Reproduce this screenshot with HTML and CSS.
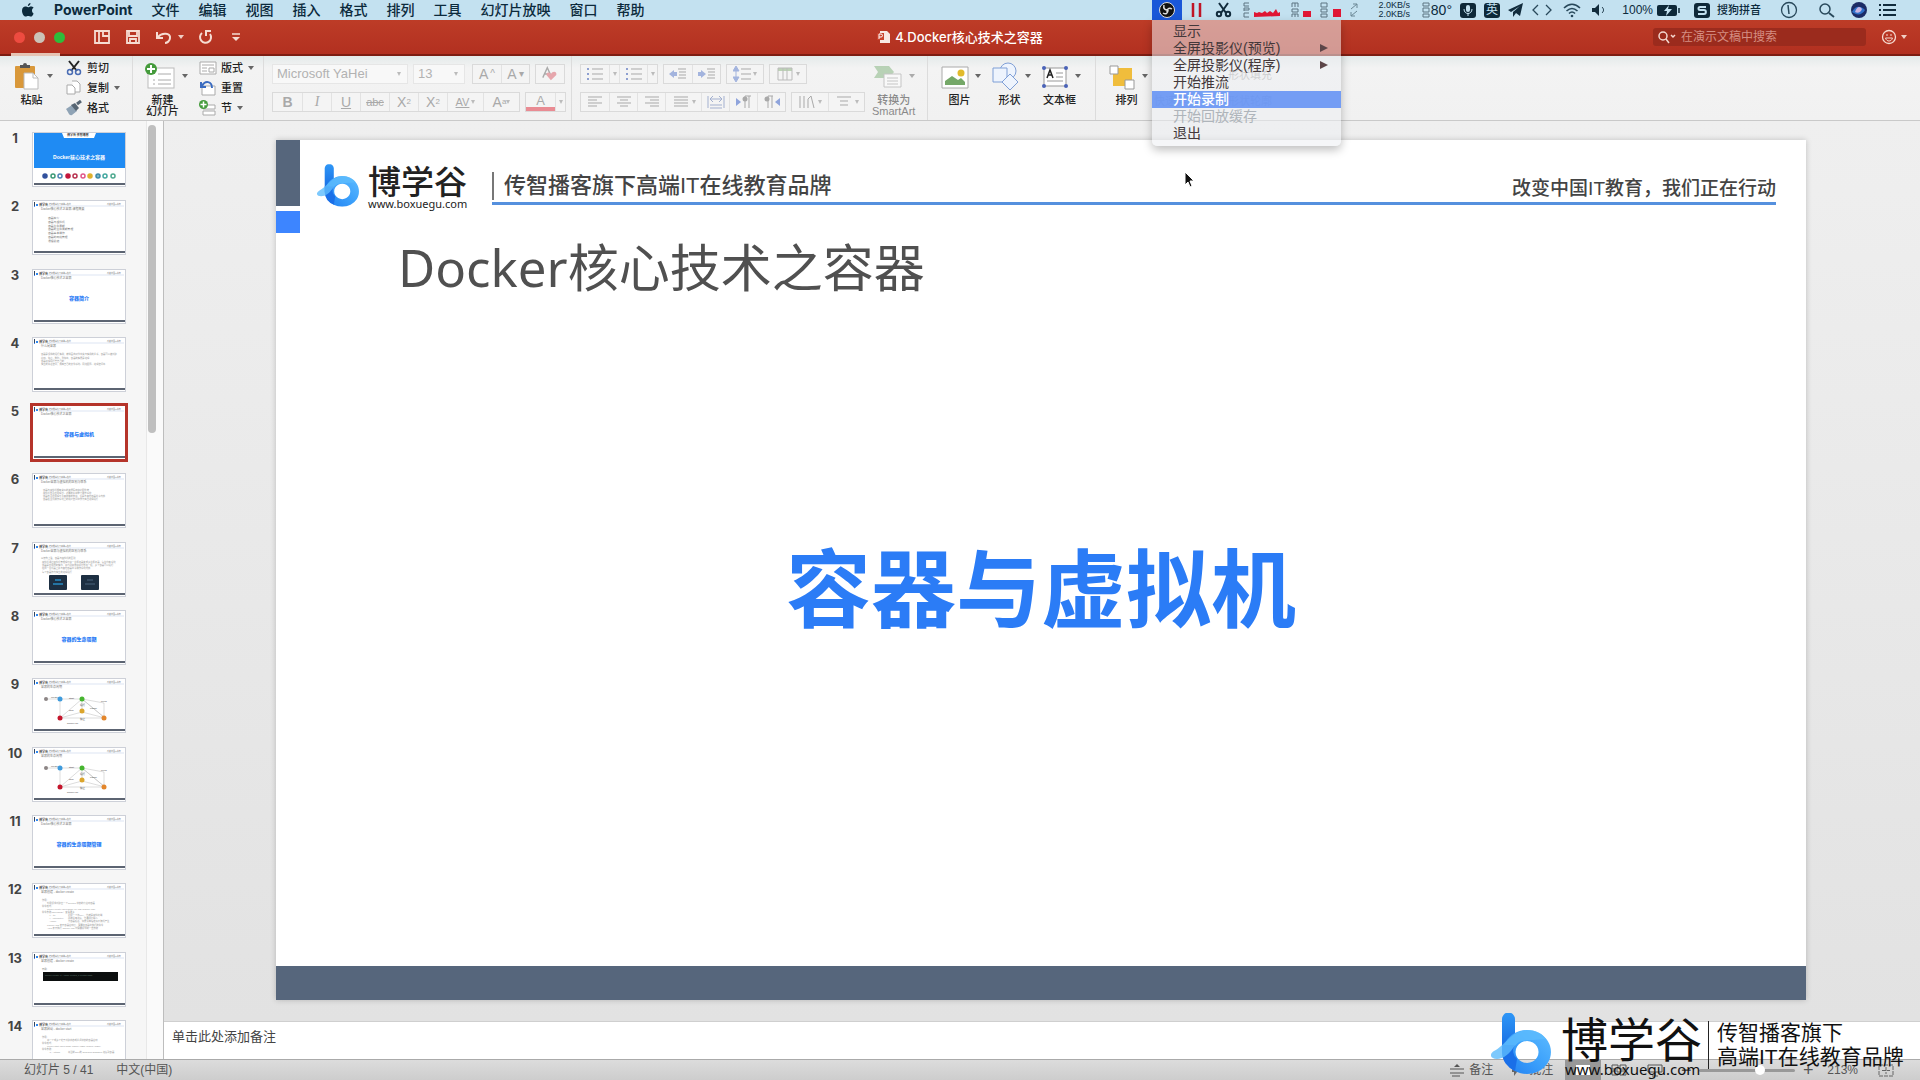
FILE: index.html
```html
<!DOCTYPE html>
<html lang="zh-CN">
<head>
<meta charset="utf-8">
<title>4.Docker核心技术之容器</title>
<link rel="stylesheet" href="styles.css">
</head>
<body>
<svg class="defs" aria-hidden="true">
  <linearGradient id="g-stem" x1="0" y1="0" x2="0" y2="1"><stop offset="0" stop-color="#2f97f7"/><stop offset="1" stop-color="#1467e0"/></linearGradient>
  <linearGradient id="g-bowl" x1="0" y1="1" x2="1" y2="0"><stop offset="0" stop-color="#1f7df0"/><stop offset=".5" stop-color="#3ba0fb"/><stop offset="1" stop-color="#5fbcff"/></linearGradient>
  <symbol id="logo-b" viewBox="0 0 60 61">
    <path d="M11 6a6.500 6.500 0 0 1 13 0V40H11z" fill="url(#g-stem)"/>
    <path d="M36 17a24 22 0 1 1-.1 0zM36 28a11.500 11 0 1 0 .1 0z" fill="url(#g-bowl)" fill-rule="evenodd"/>
    <path d="M11 32V40a25 21 0 0 0 13 18l2-12a12 11 0 0 1-2-14z" fill="#1a6fe8"/>
    <path d="M3 38C14 33 20 18 36 17c8 0 15 3 19 9-12 1-17 1-24 2-9 2-11 17-25 18-7 0-8-5-3-8z" fill="#5dbcfd" opacity=".8"/>
  </symbol>
  <symbol id="lines" viewBox="0 0 18 16"><path d="M2 3h14M2 6h9M2 9h14M2 12h9" stroke="currentColor" fill="none"/></symbol>
  <symbol id="lines-c" viewBox="0 0 18 16"><path d="M2 3h14M5 6h8M2 9h14M5 12h8" stroke="currentColor" fill="none"/></symbol>
  <symbol id="lines-r" viewBox="0 0 18 16"><path d="M2 3h14M7 6h9M2 9h14M7 12h9" stroke="currentColor" fill="none"/></symbol>
  <symbol id="lines-j" viewBox="0 0 18 16"><path d="M2 3h14M2 6h14M2 9h14M2 12h14" stroke="currentColor" fill="none"/></symbol>
  <symbol id="bullets" viewBox="0 0 18 16"><path d="M6 3h11M6 8h11M6 13h11" stroke="currentColor"/><path d="M1 3h2M1 8h2M1 13h2" stroke="#8e9fd0" stroke-width="2"/></symbol>
  <symbol id="spacing" viewBox="0 0 18 16"><path d="M8 3h10M8 8h10M8 13h10" stroke="currentColor"/><path d="M3 0l3 5H0zM3 16l3-5H0zM3 4v8" fill="#a3b4de" stroke="#a3b4de"/></symbol>
  <symbol id="indent" viewBox="0 0 18 16"><path d="M9 3h8M10 6h7M10 9h7M9 12h8" stroke="currentColor"/><path d="M0 8l5-4v2h3v4H5v2z" fill="#a3b4de"/></symbol>
  <symbol id="indent-more" viewBox="0 0 18 16"><path d="M9 3h8M10 6h7M10 9h7M9 12h8" stroke="currentColor"/><path d="M8 8L3 4v2H0v4h3v2z" fill="#a3b4de"/></symbol>
  <symbol id="plus" viewBox="0 0 12 12"><circle cx="6" cy="6" r="6" fill="#459b3c"/><path d="M6 2v8M2 6h8" stroke="#fff" stroke-width="2"/></symbol>
  <symbol id="thumb-head" viewBox="0 0 94 55">
    <path d="M2 2h1v4H2z" fill="#33465f"/><path d="M2 6h1v1H2z" fill="#3d85ff"/>
    <path d="M4 4h2v2H4z" fill="#2f87ee"/><text x="7" y="6" font-size="3" font-weight="700" fill="#444">博学谷</text>
    <text x="17" y="5" font-size="2">传智播客旗下高端IT在线</text><text x="75" y="5" font-size="2">改变中国IT教育</text>
    <path d="M15 6h77" stroke="#b9c9e4" stroke-width=".5"/><path d="M2 51h91v2H2z" fill="#5c6472"/>
  </symbol>
  <symbol id="thumb-flow" viewBox="0 0 94 55">
    <path d="M14 21h14M28 21h22M28 21v19h45L50 21v14M28 40l22-19 23 19-23-6-22 6M50 21l22 4v15" stroke="#bbb" stroke-width=".5" fill="none"/>
    <circle cx="14" cy="21" r="2" fill="#8c8585"/><circle cx="28" cy="21" r="2.500" fill="#3f9bdc"/><circle cx="50" cy="21" r="2.500" fill="#46b52f"/>
    <circle cx="50" cy="33" r="2.500" fill="#dba52c"/><circle cx="28" cy="40" r="2.500" fill="#c4152b"/><circle cx="72" cy="40" r="2.500" fill="#e3862b"/>
    <g font-size="2.500" fill="#444"><text x="19" y="20">create</text><text x="37" y="21">start</text><text x="48" y="28">运行</text><text x="69" y="24">killed</text><text x="37" y="33">stop</text><text x="58" y="31">pause</text><text x="48" y="42">停止</text><text x="35" y="46">docker rm</text></g>
  </symbol>
</svg>

<div class="app">
  <header class="menubar">
    <nav class="menus">
      <svg class="apple" viewBox="0 0 14 14"><path d="M9.500 0c.1 1.600-1.200 3-2.600 3C6.700 1.500 8 .2 9.500 0zM12.600 10.400C12 12 10.900 13.600 9.800 13.600c-1 0-1.400-.6-2.600-.6s-1.600.6-2.500.6C2.800 13.600 1 10.200 1 7.700 1 5 2.700 3.600 4.400 3.600c1.100 0 2 .7 2.700.7s1.700-.8 3-.8c.5 0 1.800.1 2.500 1.300-2.300 1.400-1.900 4.600 0 5.600z" fill="#0c2a3c"/></svg>
      <a href="#" class="appname">PowerPoint</a><a href="#">文件</a><a href="#">编辑</a><a href="#">视图</a><a href="#">插入</a><a href="#">格式</a><a href="#">排列</a><a href="#">工具</a><a href="#">幻灯片放映</a><a href="#">窗口</a><a href="#">帮助</a>
    </nav>
    <div class="tray">
      <div class="obs">
        <svg width="30" height="20" viewBox="0 0 30 20"><circle cx="15" cy="10" r="7.500" fill="#111" stroke="#ddd"/><g fill="none" stroke="#ddd" stroke-width="1.500"><path d="M12 5c-1 4 1 5 4 5"/><path d="M20 9c-3-2-5 0-5 3"/><path d="M11 13c3 2 5 0 5-3"/></g></svg>
        <div class="dropdown" role="menu">
          <button role="menuitem">显示</button>
          <button role="menuitem">全屏投影仪(预览)<i class="sub"></i></button>
          <button role="menuitem">全屏投影仪(程序)<i class="sub"></i></button>
          <button role="menuitem">开始推流</button>
          <button role="menuitem" class="active">开始录制</button>
          <button role="menuitem" disabled>开始回放缓存</button>
          <button role="menuitem">退出</button>
        </div>
      </div>
      <svg width="14" height="20" viewBox="0 0 14 20"><path d="M3 3v14M10 3v14" stroke="#c01526" stroke-width="2.500"/></svg>
      <svg width="22" height="20" viewBox="0 0 22 20"><g fill="none" stroke="#112b3c" stroke-width="2"><path d="M7 3l7 10M16 3L9 13"/><circle cx="7" cy="14" r="2.200"/><circle cx="16" cy="14" r="2.200"/></g></svg>
      <svg width="41" height="20" viewBox="0 0 41 20"><path d="M7 3H2v3h5M2 11V8h5v2H2M7 13H2v4h5" fill="none" stroke="#5d7482"/><path d="M12 17v-5l3 1 2-1 3 1 3-2 2 2 3-2 3 2 3-4 2 4 2-1v4z" fill="#e01634"/></svg>
      <svg width="21" height="20" viewBox="0 0 21 20"><path d="M1 7V3h6v4M4 3v4M1 9h6v3H1zM1 17v-3h6v3M4 14v3" fill="none" stroke="#5d7482"/><path d="M12 11h8v6h-8z" fill="#e01634"/></svg>
      <svg width="22" height="20" viewBox="0 0 22 20"><path d="M1 3h6v4H1zM1 9h6v3H1zM1 14h6v3H1z" fill="none" stroke="#5d7482"/><path d="M13 9h8v8h-8z" fill="#e01634"/></svg>
      <svg width="8" height="20" viewBox="0 0 8 20"><path d="M1 9l6-5M3 4h4v4M7 11l-6 5M1 12v4h4" fill="none" stroke="#6b8795"/></svg>
      <div class="net">2.0KB/s<br>2.0KB/s</div>
      <div class="temp"><svg width="9" height="20" viewBox="0 0 9 20"><path d="M1 3h6v3H1zM1 8h6v4H1zM1 14h6v3H1z" fill="none" stroke="#5d7482"/></svg>80°</div>
      <svg width="16" height="20" viewBox="0 0 16 20"><rect y="3" width="16" height="15" rx="3" fill="#0e2838"/><rect x="6" y="5" width="4" height="7" rx="2" fill="#c3e1f0"/><path d="M4 9c0 6 8 6 8 0M8 13v3" fill="none" stroke="#c3e1f0"/></svg>
      <span class="ime">英</span>
      <svg width="15" height="20" viewBox="0 0 15 20"><path d="M0 10L15 3l-3 13-4-3-3 4v-5l7-6-9 6z" fill="#112b3c"/></svg>
      <svg width="22" height="20" viewBox="0 0 22 20"><path d="M7 5l-5 5 5 5M15 5l5 5-5 5" fill="none" stroke="#28485a" stroke-width="1.300"/></svg>
      <svg width="22" height="20" viewBox="0 0 22 20"><g fill="none" stroke="#28485a" stroke-width="1.600"><path d="M3 8c5-5 11-5 16 0M5.500 11c4-3.500 7-3.500 11 0M8 13.500c2-2 4-2 6 0"/></g><circle cx="11" cy="16" r="1.300" fill="#28485a"/></svg>
      <svg width="16" height="20" viewBox="0 0 16 20"><path d="M1 8h3l4-4v12l-4-4H1z" fill="#112b3c"/><path d="M11 7c2 2 2 4 0 6" fill="none" stroke="#112b3c"/></svg>
      <div class="power">100%<svg width="25" height="20" viewBox="0 0 25 20"><rect x="1" y="5" width="20" height="11" rx="2" fill="#0e2838"/><path d="M23 8v5" stroke="#0e2838" stroke-width="1.500"/><path d="M13 5l-5 6h3l-1 5 6-7h-4z" fill="#c3e1f0"/></svg></div>
      <div class="sogou"><svg width="17" height="20" viewBox="0 0 17 20"><rect y="3" width="16" height="15" rx="3" fill="#0e2838"/><path d="M12 7H6c-2 0-2 3 0 3h4c2.500 0 2.500 4 0 4H4" fill="none" stroke="#c3e1f0" stroke-width="2"/></svg>搜狗拼音</div>
      <svg width="30" height="20" viewBox="0 0 30 20"><circle cx="20" cy="10" r="7.500" fill="none" stroke="#28485a" stroke-width="1.300"/><path d="M19 5l1 9" stroke="#28485a" stroke-width="1.500"/></svg>
      <svg width="28" height="20" viewBox="0 0 28 20"><circle cx="18" cy="9" r="5" fill="none" stroke="#28485a" stroke-width="1.500"/><path d="M22 13l5 4" stroke="#28485a" stroke-width="1.800"/></svg>
      <svg width="26" height="20" viewBox="0 0 26 20"><circle cx="16" cy="10" r="8" fill="#1c2c66"/><path d="M9 12c3-6 8-7 13-2-3 5-8 6-13 2z" fill="#2f6fc9"/><path d="M12 12c2-6 5-6 7-3-1 3-4 5-7 3z" fill="#c9b5e2"/></svg>
      <svg width="20" height="20" viewBox="0 0 20 20"><path d="M6 5h13M6 10h13M6 15h13" stroke="#112b3c" stroke-width="2"/><path d="M2 5h2M2 10h2M2 15h2" stroke="#112b3c" stroke-width="2"/></svg>
    </div>
  </header>

  <div class="titlebar">
    <div class="quick">
      <span class="lights"><i class="red"></i><i class="gray"></i><i class="green"></i></span>
      <button aria-label="模板"><svg width="18" height="16" viewBox="0 0 18 16"><path d="M2 2h14v12H2zM6 2v12M10 2v5h6" fill="none" stroke="#f6dcd2" stroke-width="1.800"/></svg></button>
      <button aria-label="保存"><svg width="16" height="16" viewBox="0 0 16 16"><path d="M2 2h12v12H2zM4 2v5h8V2M5 14v-4h6v4" fill="none" stroke="#f6dcd2" stroke-width="1.800"/></svg></button>
      <button aria-label="撤销" class="undo"><svg width="18" height="16" viewBox="0 0 18 16"><path d="M2 3v6h6M3 8c4-5 13-4 12 1 0 3-3 5-5 5" fill="none" stroke="#f6dcd2" stroke-width="2"/></svg><i class="caret"></i></button>
      <button aria-label="重做"><svg width="16" height="16" viewBox="0 0 16 16"><path d="M4 4a5.500 5.500 0 1 0 8 1M8 7V2h5" fill="none" stroke="#f6dcd2" stroke-width="2"/></svg></button>
      <button aria-label="自定义"><svg width="16" height="16" viewBox="0 0 16 16"><path d="M4 5h8" stroke="#f6dcd2" stroke-width="1.500"/><path d="M4 8h8l-4 4z" fill="#f6dcd2"/></svg></button>
    </div>
    <h1 class="doc"><svg width="14" height="14" viewBox="0 0 14 14"><path d="M3 1h7l3 3v9H3z" fill="#f8e9e4"/><path d="M0 3h7v7H0z" fill="#c9432c"/><path d="M2 9V4h2a1.500 1.500 0 0 1 0 3H2" fill="none" stroke="#fff"/></svg>4.Docker核心技术之容器</h1>
    <div class="find">
      <label class="search"><svg width="20" height="16" viewBox="0 0 20 16"><circle cx="6" cy="7" r="4" fill="none" stroke="#f4d8d0" stroke-width="1.500"/><path d="M9 10l3 4M14 6l2 2 2-2" fill="none" stroke="#f4d8d0" stroke-width="1.500"/></svg><input type="search" placeholder="在演示文稿中搜索" aria-label="在演示文稿中搜索"></label>
      <button class="smile" aria-label="反馈"><svg width="16" height="16" viewBox="0 0 16 16"><circle cx="8" cy="8" r="6.500" fill="none" stroke="#f6dcd2" stroke-width="1.300"/><path d="M6 5v2M10 5v2M4.500 9c1 4 6 4 7 0z" fill="none" stroke="#f6dcd2"/></svg><i class="caret"></i></button>
    </div>
  </div>

  <div class="ribbon">
    <section class="group g-clip">
      <button class="big"><span><svg width="28" height="28" viewBox="0 0 28 28"><rect x="2" y="4" width="20" height="22" rx="1" fill="#d9983a"/><path d="M7 6V3h3a2 2 0 0 1 4 0h3v3z" fill="#555"/><path d="M11 11h9l5 5v11H11z" fill="#fff" stroke="#bbb"/><path d="M20 11v5h5" fill="none" stroke="#bbb"/></svg><i class="caret"></i></span><b>粘贴</b></button>
      <div class="stack">
        <button><svg width="18" height="16" viewBox="0 0 18 16"><path d="M4 1l8 10M14 1L6 11" stroke="#222" stroke-width="2"/><g fill="none" stroke="#4a6db5" stroke-width="1.500"><circle cx="5" cy="12" r="2.500"/><circle cx="13" cy="12" r="2.500"/></g></svg>剪切</button>
        <button><svg width="18" height="16" viewBox="0 0 18 16"><path d="M2 5h5l3 3v6H2zM7 1h5l3 3v8h-5" fill="#fff" stroke="#aaa"/></svg>复制<i class="caret"></i></button>
        <button><svg width="18" height="16" viewBox="0 0 18 16"><path d="M1 9l6-4 5 6-5 4c-3 1-3-2-6-6z" fill="#8fa3b5"/><path d="M6 5l4-2 4 5-3 3z" fill="#566573"/><path d="M12 4l4-3" stroke="#566573" stroke-width="3"/></svg>格式</button>
      </div>
    </section>
    <section class="group g-slide">
      <button class="big"><span><svg width="32" height="28" viewBox="0 0 32 28"><rect x="4" y="6" width="26" height="20" fill="#fff" stroke="#bbb"/><path d="M14 12h13M9 18h2M14 18h13M9 22h2M14 22h13" stroke="#aaa"/><use href="#plus" x="1" y="1" width="12" height="12"/></svg><i class="caret"></i></span><b>新建<br>幻灯片</b></button>
      <div class="stack">
        <button><svg width="18" height="16" viewBox="0 0 18 16"><path d="M1 2h16v12H1zM3 5h12M3 8h5M3 11h5M10 8h5v4h-5z" fill="#fff" stroke="#aaa"/></svg>版式<i class="caret"></i></button>
        <button><svg width="18" height="16" viewBox="0 0 18 16"><path d="M3 6h13v9H3z" fill="#fff" stroke="#aaa"/><path d="M2 2v5h5M3 6c3-6 10-5 10 2" fill="none" stroke="#3b6cc0" stroke-width="2"/></svg>重置</button>
        <button><svg width="18" height="16" viewBox="0 0 18 16"><path d="M4 5h12v4H4zM4 11h12v4H4z" fill="#fff" stroke="#aaa"/><use href="#plus" x="0" y="0" width="9" height="9"/></svg>节<i class="caret"></i></button>
      </div>
    </section>
    <section class="group g-font">
      <div class="row">
        <label class="combo w-name"><select aria-label="字体"><option>Microsoft YaHei</option></select><i class="caret"></i></label>
        <label class="combo w-size"><select aria-label="字号"><option>13</option></select><i class="caret"></i></label>
        <div class="seg"><button class="c28 lg">A<small>^</small></button><button class="c28">A<small>▾</small></button></div>
        <div class="seg"><button class="c28"><svg width="20" height="16" viewBox="0 0 20 16"><path d="M2 12L7 1l5 11M4 8h6" fill="none" stroke="#aaa" stroke-width="1.500"/><path d="M11 15L6 9c0-4 4-3 5-1 2-4 7-3 6 1z" fill="#e6a6ac"/></svg></button></div>
      </div>
      <div class="row">
        <div class="seg"><button class="c28"><b>B</b></button><button class="c28 it">I</button><button class="c28"><u>U</u></button><button class="c28 sm"><s>abc</s></button><button class="c28 sc">X<sup>2</sup></button><button class="c28 sc">X<sub>2</sub></button><button class="c36 sm"><u>AV</u><i class="caret"></i></button><button class="c36 sc">A<sup>a</sup><i class="caret"></i></button></div>
        <div class="seg"><button class="c28 ink">A</button><button class="c10"><i class="caret"></i></button></div>
      </div>
    </section>
    <section class="group g-para">
      <div class="rows">
        <div class="row">
          <div class="seg"><button class="c28"><svg><use href="#bullets"/></svg></button><button class="c10"><i class="caret"></i></button><button class="c28"><svg><use href="#bullets"/></svg></button><button class="c10"><i class="caret"></i></button></div>
          <div class="seg"><button class="c28"><svg><use href="#indent"/></svg></button><button class="c28"><svg><use href="#indent-more"/></svg></button></div>
          <div class="seg"><button class="c36"><svg><use href="#spacing"/></svg><i class="caret"></i></button></div>
          <div class="seg"><button class="c36"><svg viewBox="0 0 18 16"><path d="M2 2h14v3H2z" fill="#bcd3b5"/><path d="M2 2h14v12H2zM7 2v12M11 2v12" fill="none" stroke="#bbb"/></svg><i class="caret"></i></button></div>
        </div>
        <div class="row">
          <div class="seg"><button class="c28"><svg><use href="#lines"/></svg></button><button class="c28"><svg><use href="#lines-c"/></svg></button><button class="c28"><svg><use href="#lines-r"/></svg></button><button class="c36"><svg><use href="#lines-j"/></svg><i class="caret"></i></button><button class="c28"><svg viewBox="0 0 18 16"><path d="M1 2v12M17 2v12M3 5h12M6 2L3 5l3 3M12 2l3 3-3 3M3 11h12M3 14h12" fill="none" stroke="#a3b0cf"/></svg></button><button class="c28"><svg viewBox="0 0 18 16"><path d="M1 4l5 4-5 4z" fill="#8fa4dc"/><path d="M10 14V2h6M14 14V2" stroke="currentColor" fill="none"/><circle cx="10" cy="5" r="2.500" fill="currentColor"/></svg></button><button class="c28"><svg viewBox="0 0 18 16"><path d="M17 4l-5 4 5 4z" fill="#8fa4dc"/><path d="M5 14V2h5M9 14V2" stroke="currentColor" fill="none"/><circle cx="4" cy="5" r="2.500" fill="currentColor"/></svg></button></div>
          <div class="seg"><button class="c36"><svg viewBox="0 0 18 16"><path d="M2 2v12M6 2v12M10 14V5l3-3 3 12" fill="none" stroke="currentColor"/></svg><i class="caret"></i></button><button class="c36"><svg viewBox="0 0 18 16"><path d="M2 3h14M5 7h8M5 11h8" stroke="currentColor"/></svg><i class="caret"></i></button></div>
        </div>
      </div>
      <button class="big faded"><span><svg width="30" height="28" viewBox="0 0 30 28"><path d="M1 4h15l5 6-5 6H1l4-6z" fill="#7fb27a"/><path d="M11 12h17v13H11z" fill="#fff" stroke="#999"/><path d="M14 16h11M14 19h11M14 22h11" stroke="#999"/></svg><i class="caret"></i></span><b>转换为<br>SmartArt</b></button>
    </section>
    <section class="group g-insert">
      <button class="big"><span><svg width="28" height="28" viewBox="0 0 28 28"><path d="M1 5h26v21H1z" fill="#fff" stroke="#aaa"/><path d="M4 23v-4l7-5 6 4 3-2 4 4v3z" fill="#75a868"/><circle cx="20" cy="11" r="3.500" fill="#e2bb2d"/></svg><i class="caret"></i></span><b>图片</b></button>
      <button class="big"><span><svg width="28" height="28" viewBox="0 0 28 28"><g fill="#eef4fd" stroke="#7f9fd6"><circle cx="17" cy="9" r="8"/><path d="M2 6h14v14H2z"/><path d="M19 12l8 8-8 8-8-8z"/></g></svg><i class="caret"></i></span><b>形状</b></button>
      <button class="big"><span><svg width="28" height="28" viewBox="0 0 28 28"><path d="M3 6h22v18H3z" fill="#fff" stroke="#999"/><path d="M15 11h7M15 15h7M6 19h16" stroke="#999"/><path d="M6 16l3-8 3 8M7 13h4" fill="none" stroke="#222" stroke-width="1.500"/><g fill="#4a63b8"><circle cx="3" cy="6" r="2"/><circle cx="25" cy="6" r="2"/><circle cx="3" cy="24" r="2"/><circle cx="25" cy="24" r="2"/></g></svg><i class="caret"></i></span><b>文本框</b></button>
    </section>
    <section class="group g-arrange">
      <button class="big"><span><svg width="28" height="28" viewBox="0 0 28 28"><path d="M5 6h19v18H5z" fill="#f0bd3c"/><path d="M2 4h8v8H2zM17 18h9v9h-9z" fill="#fff" stroke="#999"/></svg><i class="caret"></i></span><b>排列</b></button>
      <button class="big faded quickstyle">快速样式</button>
      <div class="stack faded shapes"><button>形状填充</button><button>形状轮廓</button></div>
    </section>
  </div>

  <main class="work">
    <aside class="pane">
      <ol class="slides">
        <li><span>1</span><svg viewBox="0 0 94 55"><path d="M2 1h91v35H2z" fill="#1f8bf3"/><path d="M30 1h34l-2 5H32z" fill="#fff"/><text x="35" y="4" font-size="3" font-weight="700" fill="#333">博学谷 传智播客</text><text x="47" y="27" font-size="5" font-weight="700" fill="#fff" text-anchor="middle">Docker核心技术之容器</text>
          <g fill="#fff" stroke-width="1.500"><circle cx="13" cy="44" r="2" stroke="#30509c" fill="#30509c"/><circle cx="21" cy="44" r="2" stroke="#3c9a76"/><circle cx="28" cy="44" r="2" stroke="#4d85b5"/><circle cx="36" cy="44" r="2" stroke="#c3143b" fill="#c3143b"/><circle cx="43" cy="44" r="2" stroke="#b73250"/><circle cx="51" cy="44" r="2" stroke="#e0568a"/><circle cx="58" cy="44" r="2" stroke="#dfb02c" fill="#dfb02c"/><circle cx="66" cy="44" r="2" stroke="#3c89a8" fill="#79b4c4"/><circle cx="73" cy="44" r="2" stroke="#43a8a0"/><circle cx="81" cy="44" r="2" stroke="#4faa90"/></g><path d="M2 51h91v2H2z" fill="#5c6472"/></svg></li>
        <li><span>2</span><svg viewBox="0 0 94 55"><use href="#thumb-head"/><text x="9" y="10" font-size="3">Docker核心技术之容器-课程概要</text><g font-size="2.800"><text x="16" y="19">容器简介</text><text x="16" y="23">容器与虚拟机</text><text x="16" y="27">容器生命周期</text><text x="16" y="30">容器的生命周期管理</text><text x="16" y="34">容器基本操作</text><text x="16" y="38">容器的网络管理</text><text x="16" y="42">课程总结</text></g></svg></li>
        <li><span>3</span><svg viewBox="0 0 94 55"><use href="#thumb-head"/><text x="9" y="10" font-size="3">Docker核心技术之容器</text><text class="topic" x="47" y="31">容器简介</text></svg></li>
        <li><span>4</span><svg viewBox="0 0 94 55"><use href="#thumb-head"/><text x="9" y="10" font-size="3">什么是容器</text><g font-size="2.300" class="thin"><text x="9" y="18">容器是镜像的运行实例，就像面向对象中类与实例的关系，容器可以被创建</text><text x="9" y="22">启动、停止、删除、暂停等，容器的实质是进程</text><text x="9" y="25">容器进程运行于自己的</text><text x="9" y="28">独立的命名空间，拥有自己的文件系统、网络配置、进程空间等</text></g></svg></li>
        <li class="current"><span>5</span><svg viewBox="0 0 94 55"><use href="#thumb-head"/><text x="9" y="10" font-size="3">Docker核心技术之容器</text><text class="topic" x="47" y="31">容器与虚拟机</text></svg></li>
        <li><span>6</span><svg viewBox="0 0 94 55"><use href="#thumb-head"/><text x="9" y="10" font-size="3">Docker容器与虚拟机的区别与联系</text><g font-size="2.300" class="thin"><text x="11" y="18">容器与虚拟机拥有类似的资源隔离和分配优势</text><text x="11" y="21">虚拟机包含应用程序、必要的库和整个操作系统</text><text x="11" y="24">容器包含应用程序及其所有的依赖，但是与其他容器共享内核</text><text x="11" y="27">容器在主机操作系统上的用户空间中作为独立进程运行</text></g></svg></li>
        <li><span>7</span><svg viewBox="0 0 94 55"><use href="#thumb-head"/><text x="9" y="10" font-size="3">Docker容器与虚拟机的区别与联系</text><g font-size="2.300" class="thin"><text x="9" y="17">从架构上看，容器与虚拟机的区别</text><text x="10" y="21">虚拟机通过虚拟机管理程序将一台服务器变成多台服务器，每台均有系统</text><text x="10" y="24">容器是应用层的抽象，将代码和依赖项打包在一起，多个容器可以运行</text><text x="10" y="27">在同一台机器上并与其他容器共享操作系统内核</text><text x="10" y="31">每个容器作为独立的进程运行</text></g><rect x="17" y="33" width="18" height="15" rx="1" fill="#1d2f42"/><path d="M21 42h10M23 38h6" stroke="#2474a3" stroke-width="2"/><rect x="49" y="33" width="18" height="15" rx="1" fill="#1d2f42"/><path d="M53 42h10M55 38h6" stroke="#33495f" stroke-width="2"/></svg></li>
        <li><span>8</span><svg viewBox="0 0 94 55"><use href="#thumb-head"/><text x="9" y="10" font-size="3">Docker核心技术之容器</text><text class="topic" x="47" y="31">容器的生命周期</text></svg></li>
        <li><span>9</span><svg viewBox="0 0 94 55"><use href="#thumb-head"/><text x="9" y="10" font-size="3">容器的生命周期</text><use href="#thumb-flow"/></svg></li>
        <li><span>10</span><svg viewBox="0 0 94 55"><use href="#thumb-head"/><text x="9" y="10" font-size="3">容器的生命周期</text><use href="#thumb-flow"/></svg></li>
        <li><span>11</span><svg viewBox="0 0 94 55"><use href="#thumb-head"/><text x="9" y="10" font-size="3">Docker核心技术之容器</text><text class="topic" x="47" y="31">容器的生命周期管理</text></svg></li>
        <li><span>12</span><svg viewBox="0 0 94 55"><use href="#thumb-head"/><text x="9" y="10" font-size="3">容器创建 - docker create</text><g font-size="2.300" class="thin"><text x="10" y="18">作用：</text><text x="15" y="21">利用镜像创建出一个Created 状态的待启动容器</text><text x="10" y="24">命令格式：</text><text x="15" y="27">docker create [OPTIONS] IMAGE [COMMAND]</text><text x="10" y="30">命令参数(OPTIONS)：查看更多</text><text x="17" y="33">-t, --tty</text><text x="36" y="33">分配一个伪TTY，也就是虚拟终端</text><text x="17" y="36">-i, --interactive</text><text x="36" y="36">即使没有连接，也要保持输入</text><text x="17" y="39">--name</text><text x="36" y="39">为容器起名，如果没有指定将会随机产生</text><text x="15" y="43">COMMAND 表示容器启动后，需要在容器中执行的命令</text><text x="15" y="46">ARG 表示执行 COMMAND 时需要提供的一些参数</text></g></svg></li>
        <li><span>13</span><svg viewBox="0 0 94 55"><use href="#thumb-head"/><text x="9" y="10" font-size="3">容器创建 - docker create</text><text x="10" y="18" font-size="2.300">示例：</text><path d="M11 20h75v9H11z" fill="#0b0e0e"/><text x="13" y="24" font-size="2.300" class="term">docker create -it --name centos_1 centos bash</text></svg></li>
        <li><span>14</span><svg viewBox="0 0 94 55"><use href="#thumb-head"/><text x="9" y="10" font-size="3">容器启动 - docker start</text><g font-size="2.300" class="thin"><text x="10" y="18">作用：</text><text x="15" y="21">将一个或多个处于创建状态或关闭状态的容器启动</text><text x="10" y="24">命令格式：</text><text x="15" y="27">docker start [OPTIONS] CONTAINER [CONTAINER]</text><text x="10" y="30">命令参数：</text><text x="17" y="33">-a, --attach</text><text x="36" y="33">将当前shell的 STDOUT/STDERR 连接到容器</text></g></svg></li>
      </ol>
      <div class="scroll"><i></i></div>
    </aside>
    <div class="editor">
      <div class="stage">
        <article class="slide">
          <div class="marks"><i></i><i></i></div>
          <div class="content">
            <div class="brandbar">
              <svg class="mark" viewBox="0 0 60 61"><use href="#logo-b"/></svg>
              <div class="brand"><strong>博学谷</strong><span>www.boxuegu.com</span></div>
              <div class="slogans"><span class="left">传智播客旗下高端IT在线教育品牌</span><span class="right">改变中国IT教育，我们正在行动</span></div>
            </div>
            <h2>Docker核心技术之容器</h2>
            <p class="headline">容器与虚拟机</p>
          </div>
          <div class="base"></div>
        </article>
      </div>
      <textarea class="notes" aria-label="备注" placeholder="单击此处添加备注"></textarea>
    </div>
  </main>

  <footer class="status">
    <span class="count">幻灯片 5 / 41</span><span>中文(中国)</span>
    <div class="tools">
      <button><svg width="16" height="16" viewBox="0 0 16 16"><path d="M5 5l3-3 3 3z" fill="#555"/><path d="M1 7h14M1 11h14M3 14h8" stroke="#555"/></svg>备注</button>
      <button><svg width="16" height="16" viewBox="0 0 16 16"><path d="M3 3h10v7H8l-3 4v-4H3z" fill="#666"/></svg>批注</button>
      <button class="view on" aria-label="普通"><svg width="16" height="16" viewBox="0 0 16 16"><path d="M1 3h14v10H1z" fill="#fff"/></svg></button>
      <button class="view" aria-label="浏览"><svg width="16" height="16" viewBox="0 0 16 16"><path d="M1 3h6v4H1zM9 3h6v4H9zM1 9h6v4H1zM9 9h6v4H9z" fill="none" stroke="#555"/></svg></button>
      <button class="view" aria-label="放映"><svg width="16" height="16" viewBox="0 0 16 16"><path d="M1 3h14v7H1zM8 10v4M5 14h6" fill="none" stroke="#555"/></svg></button>
      <button class="zoom" aria-label="缩小">−</button>
      <input type="range" min="0" max="100" value="65" aria-label="缩放">
      <button class="zoom" aria-label="放大">+</button>
      <span class="pct">213%</span>
      <button aria-label="适应窗口"><svg width="16" height="16" viewBox="0 0 16 16"><path d="M1 3h14v11H1zM8 5v7M4 8.500h8" fill="none" stroke="#666" stroke-dasharray="4 1"/></svg></button>
    </div>
  </footer>

  <div class="watermark">
    <svg width="60" height="61"><use href="#logo-b"/></svg>
    <div class="wm-name"><strong>博学谷</strong><span>www.boxuegu.com</span></div>
    <p>传智播客旗下<br>高端IT在线教育品牌</p>
  </div>
  <svg class="cursor" viewBox="0 0 12 18"><path d="M1 1v13l3-3 2 5 2-1-2-5h4z" fill="#111" stroke="#fff"/></svg>
</div>
</body>
</html>
```
FILE: styles.css
```css
* { box-sizing: border-box; }
body { margin: 0; font: 12px/1 "Liberation Sans", "Noto Sans CJK SC", sans-serif; color: #222; }
button { border: 0; padding: 0; background: none; font: inherit; color: inherit; display: flex; align-items: center; white-space: nowrap; }
a { color: inherit; text-decoration: none; }
svg { display: block; flex: none; }
.defs { position: absolute; width: 0; height: 0; }
.app { position: relative; height: 100vh; display: flex; flex-direction: column; overflow: hidden; }
.caret { flex: none; border: 3px solid transparent; border-top: 4px solid #666; border-bottom: 0; }

/* system menu bar */
.menubar { display: flex; justify-content: space-between; height: 20px; flex: none; background: #c3e1f0; color: #0c2a3c; font-size: 14px; }
.menus { display: flex; align-items: center; gap: 19px; padding-left: 21px; white-space: nowrap; line-height: 20px; font-weight: 500; }
.apple { width: 14px; height: 14px; }
.appname { font-family: Inter, sans-serif; font-weight: 700; font-size: 14px; }
.tray { display: flex; gap: 8px; padding-right: 23px; }
.tray > div { display: flex; align-items: center; justify-content: flex-end; white-space: nowrap; }
.tray .obs { position: relative; background: #1957d8; width: 30px; }
.tray .net { width: 44px; font-size: 9px; line-height: 9px; }
.temp { width: 34px; }
.ime { width: 16px; height: 15px; margin-top: 3px; border-radius: 3px; background: #0e2838; color: #c3e1f0; font-size: 12px; line-height: 15px; text-align: center; }
.power { width: 66px; gap: 3px; font-size: 12px; }
.sogou { width: 72px; gap: 6px; font-size: 11px; font-weight: 500; }
.dropdown { position: absolute; z-index: 5; left: 0; top: 20px; width: 189px; padding: 3px 0 4px; background: rgba(236, 238, 243, .55); border-radius: 0 0 5px 5px; box-shadow: 0 4px 10px rgba(0, 0, 0, .25); font-size: 14px; }
.dropdown button { width: 100%; height: 17px; padding: 0 13px 2px 21px; justify-content: space-between; color: #43383a; }
.dropdown .active { background: rgba(94, 142, 245, .85); color: #fff; font-weight: 500; }
.dropdown button:disabled { color: #aeb4ba; }
.sub { border: 4px solid transparent; border-left: 8px solid #5c4548; border-right: 0; }

/* window title bar */
.titlebar { display: grid; grid-template-columns: 1fr auto 1fr; align-items: center; height: 36px; flex: none; background: linear-gradient(#bd3c27, #b23020); border-bottom: 2px solid #7d1d12; color: #fff; }
.quick { display: flex; align-items: center; gap: 14px; padding-left: 14px; }
.lights { display: flex; gap: 9px; margin-right: 14px; }
.lights i { width: 11px; height: 11px; border-radius: 50%; }
.red { background: #ee4b40; }
.gray { background: #cbc3b8; }
.green { background: #2fbc3b; }
.titlebar .caret { border-top-color: #f0cfc5; }
.undo { gap: 5px; }
.doc { display: flex; align-items: center; gap: 4px; margin: 0; font: 500 13px/20px Inter, "Noto Sans CJK SC", sans-serif; }
.find { display: flex; justify-content: flex-end; align-items: center; gap: 15px; padding-right: 13px; }
.search { display: flex; align-items: center; width: 213px; height: 18px; padding: 0 4px; gap: 4px; background: #9b2b1d; border-radius: 3px; }
.search input { flex: 1; min-width: 0; border: 0; padding: 0; background: none; font: inherit; color: #fff; outline: 0; }
.search input::placeholder { color: #d58e82; opacity: 1; }
.smile { gap: 4px; }

/* ribbon */
.ribbon { position: relative; display: flex; height: 65px; flex: none; background: linear-gradient(#e4eaea, #f3f3f3 12px, #f1f1f1); border-bottom: 1px solid #c9c9c9; font-size: 11px; }
.ribbon::before { content: ""; position: absolute; left: 11px; top: -3px; width: 49px; height: 3px; background: #e6c4b4; }
.group { display: flex; flex: none; border-right: 1px solid #dcdcdc; }
.g-clip { width: 133px; padding-left: 13px; gap: 12px; }
.g-slide { width: 131px; padding-left: 11px; gap: 11px; }
.g-font { width: 308px; padding-left: 8px; }
.g-para { width: 356px; padding-left: 8px; gap: 7px; }
.g-insert { width: 168px; padding-left: 13px; gap: 10px; }
.g-arrange { padding-left: 12px; gap: 6px; border: 0; }
.big { flex-direction: column; padding-top: 6px; gap: 5px; line-height: 11px; text-align: left; }
.big span { display: flex; align-items: center; gap: 6px; }
.big b { align-self: flex-start; min-width: 37px; text-align: center; font-weight: 500; }
.faded { opacity: .5; }
.stack { display: flex; flex-direction: column; padding-top: 2px; font-weight: 500; }
.stack button { height: 20px; gap: 4px; }
.stack .caret { margin-left: 1px; }
.quickstyle { justify-content: flex-end; padding-bottom: 13px; }
.shapes { gap: 6px; padding-top: 9px; margin-left: 24px; font-weight: 400; }
.faded.shapes, .faded.quickstyle { opacity: .35; }
.g-font, .rows { display: flex; flex-direction: column; gap: 8px; padding-top: 8px; }
.row { display: flex; gap: 5px; }
.row .caret { border-top-color: #bbb; border-left-width: 2px; border-right-width: 2px; }
.combo { display: flex; align-items: center; height: 20px; padding: 0 6px 0 4px; background: #f8f8f8; border: 1px solid #e6e6e6; }
.combo select { flex: 1; min-width: 0; appearance: none; border: 0; padding: 0; background: none; font: 13px/18px "Liberation Sans", sans-serif; color: #b2b2b2; }
.w-name { width: 136px; }
.w-size { width: 52px; margin-right: 2px; }
.seg { display: flex; height: 20px; border: 1px solid #dadada; background: #f4f4f4; }
.seg button { justify-content: center; gap: 2px; color: #a9a9a9; font-size: 14px; }
.seg button + button { border-left: 1px solid #e2e2e2; }
.seg svg { width: 18px; height: 16px; }
.seg small { font-size: 10px; }
.seg sup, .seg sub { font-size: 8px; }
.seg .sc { gap: 0; }
.c28 { width: 28px; }
.c36 { width: 36px; }
.c10 { width: 10px; }
.g-font .row + .row .c28 { width: 29px; }
.seg .sm { font-size: 11px; }
.seg .it { font-family: "Liberation Serif", serif; font-style: italic; }
.seg .ink { border-bottom: 4px solid #e98b93; font-size: 13px; }

/* slide list */
.work { flex: 1; min-height: 0; display: flex; }
.pane { display: flex; width: 164px; flex: none; background: #f6f6f6; border-right: 1px solid #bdbdbd; }
.slides { flex: 1; display: flex; flex-direction: column; justify-content: space-between; list-style: none; margin: 11px 0 -16px; padding: 0; }
.slides li { display: flex; }
.slides span { width: 30px; margin-right: 2px; text-align: center; font: 700 13px/12px Inter, sans-serif; color: #444; }
.slides svg { width: 94px; height: 55px; background: #fff; outline: 1px solid #cdd0d8; outline-offset: -1px; fill: #777; }
.slides .current svg { outline: 3px solid #b5342a; outline-offset: -1px; }
.thin { fill: #999; }
.topic { font-size: 5px; font-weight: 900; fill: #2b7cf6; text-anchor: middle; }
.term { fill: #5d7a6c; }
.scroll { width: 17px; padding: 4px 6px 0 1px; border-left: 1px solid #e8e8e8; background: #fafafa; }
.scroll i { display: block; width: 8px; height: 33%; border-radius: 4px; background: #bfbfbf; }

/* editor */
.editor { flex: 1; display: flex; flex-direction: column; min-width: 0; }
.stage { flex: 1; display: flex; padding: 19px 114px 21px 112px; background: linear-gradient(#efefef, #e2e2e2); }
.slide { flex: 1; display: grid; grid-template-columns: 24px 1fr; grid-template-rows: 1fr 34px; background: #fff; box-shadow: 0 0 6px rgba(0, 0, 0, .2); }
.marks i { display: block; height: 66px; background: #56667c; }
.marks i + i { height: 22px; margin-top: 5px; background: #3d85ff; }
.content { display: flex; flex-direction: column; }
.base { grid-column: 1 / 3; background: #56667c; }
.brandbar { display: flex; padding: 24px 30px 0 17px; }
.mark { width: 42px; height: 43px; }
.brand { width: 98px; margin: 4px 26px 0 9px; display: flex; flex-direction: column; color: #222; }
.brand strong { font-size: 33px; line-height: 30px; font-weight: 500; white-space: nowrap; }
.brand span { font: 11px/12px "Noto Sans", sans-serif; }
.slogans { flex: 1; display: flex; justify-content: space-between; align-items: center; height: 41px; border-bottom: 3px solid #5590de; color: #444; font-weight: 500; white-space: nowrap; }
.slogans .left { padding-left: 10px; border-left: 2px solid #777; font-size: 22px; line-height: 28px; margin-top: 5px; }
.slogans .right { font-size: 19px; margin-top: 10px; }
.content h2 { margin: 22px 0 0 98px; font: 400 51px/70px "Noto Sans", "Noto Sans CJK SC", sans-serif; color: #505050; }
.headline { margin: 238px 24px 0 0; text-align: center; font-size: 85px; line-height: 104px; font-weight: 700; color: #2b7cf6; }
.notes { height: 38px; flex: none; border: 0; border-top: 1px solid #cfcfcf; padding: 5px 8px; resize: none; outline: 0; font: 13px/18px "Noto Sans CJK SC", sans-serif; }
.notes::placeholder { color: #444; opacity: 1; }

/* status bar */
.status { display: flex; align-items: center; height: 21px; flex: none; padding: 0 26px 0 24px; gap: 23px; background: linear-gradient(#dcdcdc, #cdcdcd); border-top: 1px solid #aaa; color: #555; }
.tools { display: flex; align-items: center; margin-left: auto; }
.tools button { gap: 4px; height: 20px; margin-right: 16px; }
.tools .view { width: 36px; margin: 0; justify-content: center; }
.tools .on { background: #989898; margin-left: -4px; }
.tools .zoom { width: 18px; margin: 0 4px; justify-content: center; font-size: 18px; }
.tools button:last-child { margin: 0 0 0 20px; }
.pct { margin-left: 6px; }
.tools input { appearance: none; width: 96px; height: 3px; margin: 0; background: #999; border-radius: 2px; }
.tools input::-webkit-slider-thumb { appearance: none; width: 10px; height: 10px; border-radius: 50%; background: #fff; }

/* overlays */
.watermark { position: absolute; right: 12px; bottom: 3px; display: flex; align-items: flex-start; color: #111; white-space: nowrap; }
.watermark svg { margin-top: 3px; }
.wm-name { width: 143px; margin: 11px 4px 0 10px; display: flex; flex-direction: column; }
.wm-name strong { font-size: 47px; line-height: 40px; font-weight: 400; }
.wm-name span { padding-left: 4px; font: 15px/16px "Noto Sans", sans-serif; }
.watermark p { width: 200px; margin: 11px 0 0; padding-left: 8px; border-left: 1px solid #222; font-size: 21px; line-height: 24px; }
.cursor { position: absolute; left: 1184px; top: 171px; width: 12px; height: 18px; }
```
